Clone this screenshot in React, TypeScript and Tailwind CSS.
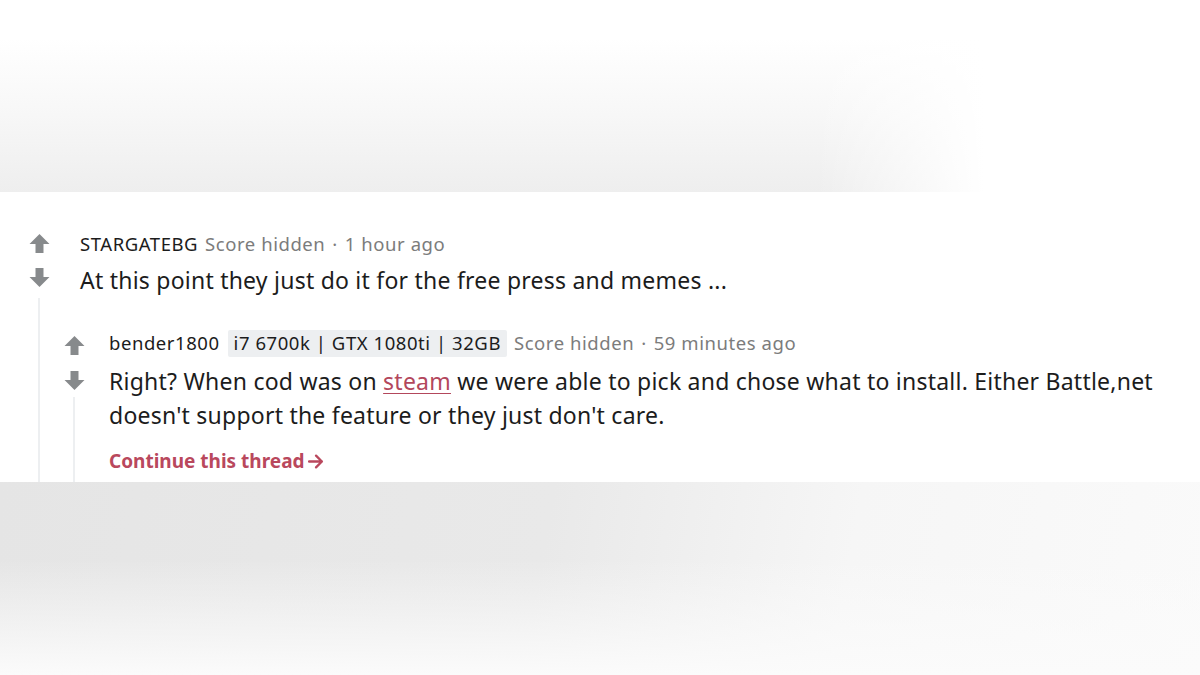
import type { ReactNode } from "react";

const Vote = ({ down = false }: { down?: boolean }) => (
  <svg viewBox="0 0 20 20" className={`w-[21px] h-[21px] ${down ? "rotate-180" : ""}`}>
    <path d="M10 1 L19.5 10.5 H13.8 V19 H6.2 V10.5 H0.5 Z" fill="#878a8c" />
  </svg>
);

type CommentProps = {
  author: string;
  flair?: string;
  time: string;
  body: ReactNode;
  textPad: string;
  bodyGap: string;
  arrowTop: string;
  arrowGap: string;
  lineGap: string;
  children?: ReactNode;
  footer?: ReactNode;
};

const Comment = ({ author, flair, time, body, textPad, bodyGap, arrowTop, arrowGap, lineGap, children, footer }: CommentProps) => (
  <div className="flex">
    <div className="w-[22px] shrink-0 flex flex-col items-center">
      <div className={arrowTop}>
        <Vote />
      </div>
      <div className={arrowGap}>
        <Vote down />
      </div>
      <div className={`w-[2px] flex-1 bg-[#edeff1] ${lineGap}`} />
    </div>
    <div className="flex-1 min-w-0">
      <div className={textPad}>
        <div className="h-[24px] flex items-center text-[18.5px] tracking-[0.03em] whitespace-nowrap">
          <span className="text-[#1c1c1c]">{author}</span>
          {flair && (
            <span className="ml-[8px] px-[6px] h-[27px] flex items-center bg-[#edeff1] text-[#1c1c1c] rounded-[2px]">
              {flair}
            </span>
          )}
          <span className="ml-[7px] text-[#7c7c7c]">Score hidden</span>
          <span className="mx-[7px] text-[#7c7c7c]">·</span>
          <span className="text-[#7c7c7c]">{time}</span>
        </div>
        <div className={`text-[23px] leading-[34px] tracking-[0.01em] text-[#1c1c1c] pr-[30px] ${bodyGap}`}>{body}</div>
        {footer}
      </div>
      {children && <div className="pl-[13px] pt-[34px]">{children}</div>}
    </div>
  </div>
);

export default function App() {
  return (
    <div className="w-[1200px] h-[675px] flex flex-col overflow-hidden font-['Noto_Sans','Open_Sans',sans-serif]">
      <div className="h-[192px] shrink-0 bg-[linear-gradient(to_right,rgba(255,255,255,0)_68%,#ffffff_82%),linear-gradient(to_bottom,#ffffff_20%,#f7f7f7_60%,#eeeeee)]" />
      <div className="h-[290px] shrink-0 bg-white overflow-hidden pl-[28px] pt-[40px]">
        <Comment
          author="STARGATEBG"
          time="1 hour ago"
          textPad="pl-[30px]"
          bodyGap="mt-[7px]"
          arrowTop="mt-[1px]"
          arrowGap="mt-[13px]"
          lineGap="mt-[10px]"
          body="At this point they just do it for the free press and memes ..."
        >
          <div className="pb-[80px]">
            <Comment
              author="bender1800"
              flair="i7 6700k | GTX 1080ti | 32GB"
              time="59 minutes ago"
              textPad="pl-[24px]"
              bodyGap="mt-[9px]"
              arrowTop="mt-[4px]"
              arrowGap="mt-[14px]"
              lineGap="mt-[6px]"
              body={
                <>
                  Right? When cod was on{" "}
                  <span className="text-[#b3475c] underline decoration-[1px] underline-offset-[3px]">steam</span>{" "}
                  we were able to pick and chose what to install. Either Battle,net doesn't support the feature or they
                  just don't care.
                </>
              }
              footer={
                <div className="mt-[17px] mb-[60px] h-[24px] flex items-center text-[19px] font-bold text-[#b9485d]">
                  Continue this thread
                  <svg viewBox="0 0 16 16" className="ml-[2px] w-[17px] h-[17px]" fill="none" stroke="#b9485d" strokeWidth="2.2" strokeLinecap="round" strokeLinejoin="round">
                    <path d="M2 8 H14 M8.5 2.5 L14 8 L8.5 13.5" />
                  </svg>
                </div>
              }
            />
          </div>
        </Comment>
      </div>
      <div className="flex-1 bg-[linear-gradient(to_bottom,rgba(251,251,251,0)_40%,#fbfbfb),linear-gradient(100deg,#e5e5e5_0%,#e9e9e9_45%,#f6f6f6_70%,#fafafa_100%)]" />
    </div>
  );
}
